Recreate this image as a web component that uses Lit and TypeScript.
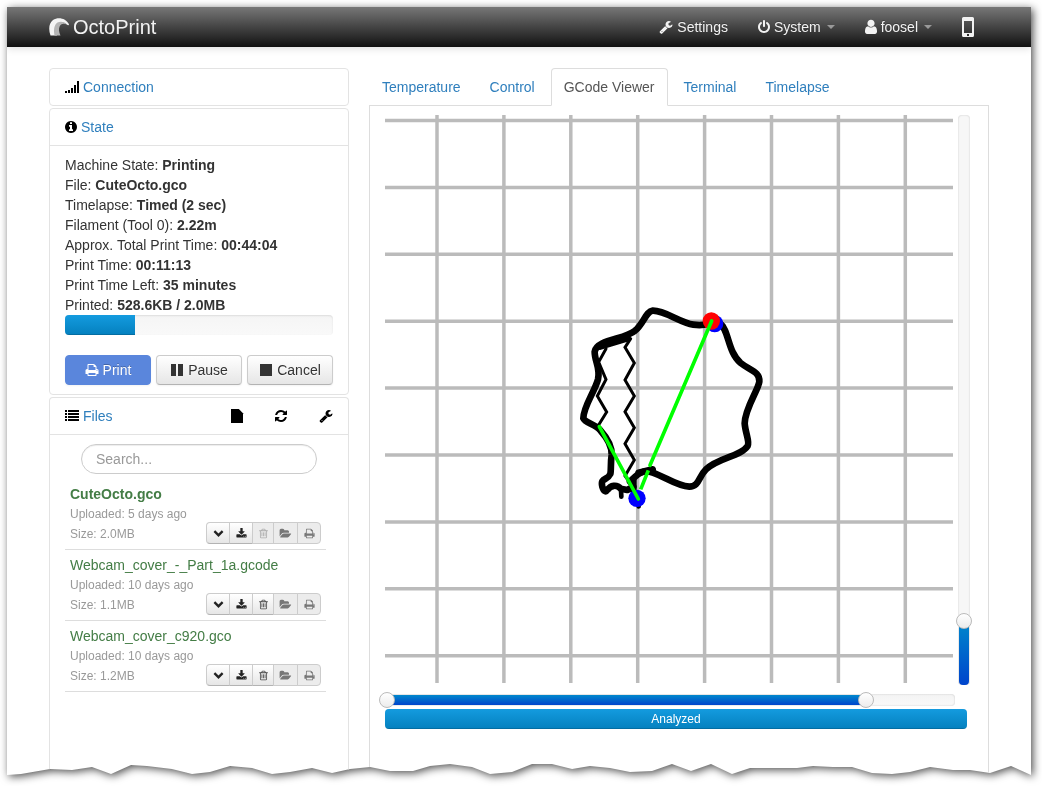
import { LitElement, html, svg, css, unsafeCSS, nothing } from "lit";
import { customElement } from "lit/decorators.js";
import { classMap } from "lit/directives/class-map.js";
import { styleMap } from "lit/directives/style-map.js";

// Torn lower edge of the sheet: [distance along a 1024 unit width, rise above the bottom in px]
const TEAR: [number, number][] = [
  [0, 0], [14, 1], [43, 6], [65, 5], [85, 8], [104, 1], [124, 10], [140, 9], [165, 6], [185, 1], [203, 3],
  [223, 9], [245, 7], [265, 1], [283, 3], [305, 7], [325, 2], [343, 6], [363, 8], [383, 4], [406, 4], [423, 9],
  [443, 11], [465, 8], [483, 1], [505, 3], [525, 11], [545, 11], [565, 6], [583, 9], [603, 7], [623, 3],
  [645, 4], [665, 11], [684, 4], [704, 11], [725, 1], [743, 7], [790, 7], [806, 9], [826, 8], [845, 8],
  [865, 2], [885, 1], [903, 3], [923, 8], [946, 5], [963, 5], [983, 2], [1004, 9], [1024, 0],
];
const tearPolygon = [
  "0 0",
  ...TEAR.map(([x, up]) => `${((x / 1024) * 100).toFixed(2)}% calc(100% - ${up}px)`),
  "100% 0",
].join(", ");

const ICONS: Record<string, string> = {
  wrench:
    "M448 1472q0-26-19-45t-45-19-45 19-19 45 19 45 45 19 45-19 19-45zm644-420l-682 682q-37 37-90 37-52 0-91-37l-106-108q-38-36-38-90 0-53 38-91l681-681q39 98 114.5 173.5t173.5 114.5zm634-435q0 39-23 106-47 134-164.5 217.5t-258.5 83.5q-185 0-316.5-131.5t-131.5-316.5 131.5-316.5 316.5-131.5q58 0 121.5 16.5t107.5 46.5q16 11 16 28t-16 28l-293 169v224l193 107q5-3 79-48.5t135.5-81 70.5-35.5q15 0 23.5 10t8.5 25z",
  power:
    "M1664 896q0 156-61 298t-164 245-245 164-298 61-298-61-245-164-164-245-61-298q0-182 80.5-343t226.5-270q43-32 95.5-25t83.5 50q32 42 24.5 94.5t-49.5 84.5q-98 74-151.5 181t-53.5 228q0 104 40.5 198.5t109.5 163.5 163.5 109.5 198.5 40.5 198.5-40.5 163.5-109.5 109.5-163.5 40.5-198.5q0-121-53.5-228t-151.5-181q-42-32-49.5-84.5t24.5-94.5q31-43 84-50t95 25q146 109 226.5 270t80.5 343zm-640-768v640q0 52-38 90t-90 38-90-38-38-90v-640q0-52 38-90t90-38 90 38 38 90z",
  user:
    "M1536 1399q0 109-62.5 187t-150.5 78h-854q-88 0-150.5-78t-62.5-187q0-85 8.5-160.5t31.5-152 58.5-131 94-89 134.5-34.5q131 128 313 128t313-128q76 0 134.5 34.5t94 89 58.5 131 31.5 152 8.5 160.5zm-256-887q0 159-112.5 271.5t-271.5 112.5-271.5-112.5-112.5-271.5 112.5-271.5 271.5-112.5 271.5 112.5 112.5 271.5z",
  info:
    "M1152 1376v-160q0-14-9-23t-23-9h-96v-512q0-14-9-23t-23-9h-320q-14 0-23 9t-9 23v160q0 14 9 23t23 9h96v320h-96q-14 0-23 9t-9 23v160q0 14 9 23t23 9h448q14 0 23-9t9-23zm-128-896v-160q0-14-9-23t-23-9h-192q-14 0-23 9t-9 23v160q0 14 9 23t23 9h192q14 0 23-9t9-23zm640 416q0 209-103 385.5t-279.5 279.5-385.5 103-385.5-103-279.5-279.5-103-385.5 103-385.5 279.5-279.5 385.5-103 385.5 103 279.5 279.5 103 385.5z",
  print:
    "M448 1536h896v-256h-896v256zm0-640h896v-384h-160q-40 0-68-28t-28-68v-160h-640v640zm1152 64q0-26-19-45t-45-19-45 19-19 45 19 45 45 19 45-19 19-45zm128 0v416q0 13-9.5 22.5t-22.5 9.5h-224v160q0 40-28 68t-68 28h-960q-40 0-68-28t-28-68v-160h-224q-13 0-22.5-9.5t-9.5-22.5v-416q0-79 56.5-135.5t135.5-56.5h64v-544q0-40 28-68t68-28h672q40 0 88 20t76 48l152 152q28 28 48 76t20 88v256h64q79 0 135.5 56.5t56.5 135.5z",
  refresh:
    "M1639 1056q0 5-1 7-64 268-268 434.5t-478 166.5q-146 0-282.5-55t-243.5-157l-129 129q-19 19-45 19t-45-19-19-45v-448q0-26 19-45t45-19h448q26 0 45 19t19 45-19 45l-137 137q71 66 161 102t187 36q134 0 250-65t186-179q11-17 53-117 8-23 30-23h192q13 0 22.5 9.5t9.5 22.5zm25-800v448q0 26-19 45t-45 19h-448q-26 0-45-19t-19-45 19-45l138-138q-148-137-349-137-134 0-250 65t-186 179q-11 17-53 117-8 23-30 23h-199q-13 0-22.5-9.5t-9.5-22.5v-7q65-268 270-434.5t480-166.5q146 0 284 55.5t245 156.5l130-129q19-19 45-19t45 19 19 45z",
  trash:
    "M704 736v576q0 14-9 23t-23 9h-64q-14 0-23-9t-9-23v-576q0-14 9-23t23-9h64q14 0 23 9t9 23zm256 0v576q0 14-9 23t-23 9h-64q-14 0-23-9t-9-23v-576q0-14 9-23t23-9h64q14 0 23 9t9 23zm256 0v576q0 14-9 23t-23 9h-64q-14 0-23-9t-9-23v-576q0-14 9-23t23-9h64q14 0 23 9t9 23zm128 724v-948h-896v948q0 22 7 40.5t14.5 27 10.5 8.5h832q3 0 10.5-8.5t14.5-27 7-40.5zm-672-1076h448l-48-117q-7-9-17-11h-317q-10 2-17 11zm928 32v64q0 14-9 23t-23 9h-96v948q0 83-47 143.5t-113 60.5h-832q-66 0-113-58.5t-47-141.5v-952h-96q-14 0-23-9t-9-23v-64q0-14 9-23t23-9h309l70-167q15-37 54-63t79-26h320q40 0 79 26t54 63l70 167h309q14 0 23 9t9 23z",
  folder:
    "M1815 952q0 31-31 66l-336 396q-43 51-120.5 86.5t-143.5 35.5h-1088q-34 0-60.5-13t-26.5-43q0-31 31-66l336-396q43-51 120.5-86.5t143.5-35.5h1088q34 0 60.5 13t26.5 43zm-343-344v160h-832q-94 0-197 47.5t-164 119.5l-337 396-5 6q0-4-.5-12.5t-.5-12.5v-960q0-92 66-158t158-66h320q92 0 158 66t66 158v32h544q92 0 158 66t66 158z",
  download:
    "M1344 1344q0-26-19-45t-45-19-45 19-19 45 19 45 45 19 45-19 19-45zm256 0q0-26-19-45t-45-19-45 19-19 45 19 45 45 19 45-19 19-45zm128-224v320q0 40-28 68t-68 28h-1472q-40 0-68-28t-28-68v-320q0-40 28-68t68-28h465l135 136q58 56 136 56t136-56l136-136h464q40 0 68 28t28 68zm-325-569q17 41-14 70l-448 448q-18 19-45 19t-45-19l-448-448q-31-29-14-70 17-39 59-39h256v-448q0-26 19-45t45-19h256q26 0 45 19t19 45v448h256q42 0 59 39z",
  chevron: "M90 640L360 370L896 906L1432 370L1702 640L896 1446z",
  list: "M0 128h256v256H0zM384 128h1408v256H384zM0 512h256v256H0zM384 512h1408v256H384zM0 896h256v256H0zM384 896h1408v256H384zM0 1280h256v256H0zM384 1280h1408v256H384z",
  signal: "M0 1408h256v256H0zM384 1280h256v384H384zM768 1024h256v640H768zM1152 640h256v1024H1152zM1536 128h256v1536H1536z",
  pause: "M128 128h640v1536H128zM1024 128h640v1536H1024z",
  stop: "M128 128h1536v1536H128z",
  file: "M128 0H1130L1664 534V1792H128z",
};

// Glyphs whose drawing is narrower than the full em square
const NARROW: Record<string, string> = {
  power: "128 0 1536 1792",
  info: "128 0 1536 1792",
  refresh: "128 0 1536 1792",
  file: "128 0 1536 1792",
  user: "256 160 1280 1493",
};

const icon = (name: string, size = "") => html`<svg
  class="icon ${size} ${name in NARROW ? "narrow" : ""}"
  viewBox=${NARROW[name] ?? "0 0 1792 1792"}
  aria-hidden="true"
>
  <path d=${ICONS[name]}></path>
</svg>`;

const STATE: [string, string][] = [
  ["Machine State", "Printing"],
  ["File", "CuteOcto.gco"],
  ["Timelapse", "Timed (2 sec)"],
  ["Filament (Tool 0)", "2.22m"],
  ["Approx. Total Print Time", "00:44:04"],
  ["Print Time", "00:11:13"],
  ["Print Time Left", "35 minutes"],
  ["Printed", "528.6KB / 2.0MB"],
];

const FILES = [
  { name: "CuteOcto.gco", age: "5 days ago", size: "2.0MB", active: true },
  { name: "Webcam_cover_-_Part_1a.gcode", age: "10 days ago", size: "1.1MB", active: false },
  { name: "Webcam_cover_c920.gco", age: "10 days ago", size: "1.2MB", active: false },
];

const TABS = ["Temperature", "Control", "GCode Viewer", "Terminal", "Timelapse"];

@customElement("app-root")
export class AppRoot extends LitElement {
  static styles = css`
    :host {
      display: flex;
      flex-direction: column;
      box-sizing: border-box;
      min-height: 100vh;
      padding: 7px 11px 11px 7px;
      background: #fff;
      color: #333;
      font-family: "Liberation Sans", Arial, sans-serif;
      font-size: 14px;
      line-height: 20px;
    }
    * {
      box-sizing: border-box;
    }
    a {
      color: #2f7fbd;
      text-decoration: none;
    }
    button,
    input {
      font: inherit;
      color: inherit;
      margin: 0;
    }
    .icon {
      width: 14px;
      height: 14px;
      fill: currentColor;
      flex: none;
      overflow: visible;
    }
    .icon.narrow {
      width: 12px;
    }
    .icon.small {
      width: 11px;
      height: 11px;
    }
    .shadow {
      flex: 1;
      display: flex;
      filter: drop-shadow(2px 2px 4px rgba(0, 0, 0, 0.7));
    }
    .sheet {
      flex: 1;
      display: flex;
      flex-direction: column;
      min-width: 0;
      background: #fff;
      clip-path: polygon(${unsafeCSS(tearPolygon)});
    }
    .wrap {
      width: 100%;
      max-width: 940px;
      margin: 0 auto;
    }

    .navbar {
      background: linear-gradient(#777, #444 50%, #111);
      box-shadow: 0 1px 8px rgba(0, 0, 0, 0.15);
      color: #f2f2f2;
    }
    .bar {
      display: flex;
      align-items: center;
      justify-content: space-between;
      height: 40px;
    }
    .brand {
      display: flex;
      align-items: center;
      gap: 4px;
      color: #f2f2f2;
      font-size: 20px;
    }
    .logo {
      width: 20px;
      height: 20px;
    }
    .nav {
      display: flex;
      list-style: none;
      margin: 0;
      padding: 0;
    }
    .nav a {
      display: flex;
      align-items: center;
      gap: 4px;
      height: 40px;
      padding: 0 15px;
      color: #f2f2f2;
      text-shadow: 0 -1px 0 rgba(0, 0, 0, 0.25);
    }
    .caret {
      border: 4px solid transparent;
      border-top-color: #999;
      border-bottom-width: 0;
      margin-left: 2px;
    }
    .phone {
      width: 12px;
      height: 20px;
    }

    .page {
      flex: 1;
      display: flex;
      gap: 20px;
      padding-top: 21px;
    }
    .sidebar {
      flex: 0 0 300px;
      display: flex;
      flex-direction: column;
      gap: 2px;
    }
    .panel {
      border: 1px solid #e3e3e3;
      border-radius: 4px;
    }
    .panel.last {
      flex: 1;
      border-bottom: 0;
      border-radius: 4px 4px 0 0;
    }
    .head {
      display: flex;
      align-items: center;
      gap: 4px;
      margin: 0;
      padding: 8px 15px;
      font-size: 14px;
      font-weight: normal;
      color: #000;
    }
    .tools {
      display: flex;
      gap: 32px;
      margin-left: auto;
    }
    .tools button {
      display: flex;
      padding: 0;
      border: 0;
      background: none;
    }
    .body {
      border-top: 1px solid #e3e3e3;
      padding: 9px 15px;
    }
    .facts {
      margin: 0;
      padding: 0;
      list-style: none;
    }
    .progress {
      height: 20px;
      border-radius: 4px;
      overflow: hidden;
      background: linear-gradient(#f5f5f5, #f9f9f9);
      box-shadow: inset 0 1px 2px rgba(0, 0, 0, 0.1);
    }
    .fill {
      height: 20px;
      background: linear-gradient(#149bdf, #0480be);
      box-shadow: inset 0 -1px 0 rgba(0, 0, 0, 0.15);
      color: #fff;
      font-size: 12px;
      text-align: center;
    }
    .actions {
      display: flex;
      gap: 5px;
      margin-top: 20px;
    }
    .btn {
      flex: 1;
      display: flex;
      align-items: center;
      justify-content: center;
      gap: 4px;
      height: 30px;
      padding: 0;
      border: 1px solid #bbb;
      border-color: #ccc #ccc #b3b3b3;
      border-radius: 4px;
      background: linear-gradient(#fff, #e6e6e6);
      box-shadow: 0 1px 2px rgba(0, 0, 0, 0.05);
      text-shadow: 0 1px 1px rgba(255, 255, 255, 0.75);
    }
    .btn.primary {
      border-color: #5a86dc;
      background: #5a86dc;
      color: #fff;
      text-shadow: 0 -1px 0 rgba(0, 0, 0, 0.25);
    }

    .search {
      display: block;
      width: auto;
      margin: 0 16px;
    }
    .search input {
      width: 100%;
      height: 30px;
      padding: 0 14px;
      border: 1px solid #ccc;
      border-radius: 15px;
      background: #fff;
      box-shadow: inset 0 1px 1px rgba(0, 0, 0, 0.075);
      outline: 0;
    }
    .search input::placeholder {
      color: #999;
    }
    .files {
      list-style: none;
      margin: 5px 7px 0 0;
      padding: 0;
    }
    .file {
      padding: 5px;
      border-bottom: 1px solid #ddd;
    }
    .name {
      color: #447d46;
    }
    .name.active {
      font-weight: bold;
    }
    .meta {
      color: #999;
      font-size: 12px;
    }
    .row {
      display: flex;
      justify-content: space-between;
      height: 20px;
    }
    .group {
      display: flex;
      height: 22px;
      margin-top: -2px;
    }
    .mini {
      display: flex;
      align-items: center;
      justify-content: center;
      width: 24px;
      padding: 0;
      border: 1px solid #ccc;
      border-bottom-color: #b3b3b3;
      margin-left: -1px;
      background: linear-gradient(#fff, #e6e6e6);
      color: #222;
    }
    .mini.trash {
      width: 22px;
      color: #444;
    }
    .mini.folder {
      width: 25px;
    }
    .mini:first-child {
      border-radius: 4px 0 0 4px;
    }
    .mini:last-child {
      border-radius: 0 4px 4px 0;
    }
    .mini:disabled {
      background: #ececec;
      border-color: #ccc;
      color: #777;
    }
    .mini.trash:disabled {
      color: #aaa;
    }

    .content {
      flex: 1;
      min-width: 0;
      display: flex;
      flex-direction: column;
    }
    .tabs {
      display: flex;
      gap: 3px;
      list-style: none;
      margin: 0;
      padding: 0;
      border-bottom: 1px solid #ddd;
    }
    .tab {
      display: block;
      margin-bottom: -1px;
      padding: 8px 12px;
      border: 1px solid transparent;
      border-radius: 4px 4px 0 0;
    }
    .tab.active {
      border-color: #ddd #ddd #fff;
      background: #fff;
      color: #555;
    }
    .pane {
      flex: 1;
      border: 1px solid #ddd;
      border-width: 0 1px;
      padding: 9px 18px 40px 15px;
    }
    .viewer {
      display: grid;
      grid-template-columns: minmax(0, 1fr) 12px;
      column-gap: 3px;
      row-gap: 9px;
    }
    .canvas {
      display: block;
      width: 100%;
    }
    .slider {
      display: grid;
      border-radius: 4px;
      background: linear-gradient(#f3f3f3, #f9f9f9);
      box-shadow: inset 0 0 2px rgba(0, 0, 0, 0.2);
    }
    .slider > * {
      grid-area: 1 / 1;
    }
    .slider.h {
      height: 12px;
    }
    .slider.v {
      width: 12px;
      background: #f7f7f7;
    }
    .range {
      background: linear-gradient(#0088cc, #0044cc);
    }
    .h .range {
      margin: 1px 0;
      border-radius: 4px;
    }
    .v .range {
      align-self: end;
      margin: 0 1px;
      border-radius: 0 0 4px 4px;
    }
    .slider input {
      appearance: none;
      background: none;
      pointer-events: none;
      outline: 0;
    }
    .h input {
      width: calc(100% + 16px);
      height: 16px;
      margin: -2px -8px;
    }
    .v input {
      writing-mode: vertical-lr;
      direction: rtl;
      width: 16px;
      height: calc(100% + 16px);
      margin: -8px -2px;
    }
    .slider input::-webkit-slider-thumb {
      appearance: none;
      pointer-events: auto;
      width: 16px;
      height: 16px;
      border: 1px solid #bbb;
      border-radius: 50%;
      background: linear-gradient(#fff, #ececec);
    }
    .analysis {
      margin: 3px 3px 0 0;
    }
  `;

  private renderNav() {
    return html`<header class="navbar">
      <div class="wrap bar">
        <a class="brand" href="#">
          <svg class="logo" viewBox="0 0 20 20" aria-hidden="true">
            <path
              fill="#f4f4f4"
              d="M1.500 18.500C-.8 12 0 6 4 3C9-.5 17 1 20 7.300C20 8.200 19 8.500 18.200 7.800C15 4.500 10 5 8 8.200C6.500 11 7 14.500 8 18.500z"
            ></path>
            <path
              fill="#b4b4b4"
              d="M5.500 18.500C4.500 12.500 5 8 8.500 5.500C12 3.700 16 5 18.200 7.800C15 6.200 12.500 6.500 10.800 9C9.300 12 10 15 11.500 18.500z"
            ></path>
          </svg>
          OctoPrint
        </a>
        <nav>
          <ul class="nav">
            <li><a href="#settings">${icon("wrench")}Settings</a></li>
            <li><a href="#system">${icon("power")}System<span class="caret"></span></a></li>
            <li><a href="#user">${icon("user")}foosel<span class="caret"></span></a></li>
            <li>
              <a href="#touch" aria-label="Touch interface">
                <svg class="phone" viewBox="0 0 12 20" aria-hidden="true">
                  <path
                    fill="#f2f2f2"
                    fill-rule="evenodd"
                    d="M1.500 0h9Q12 0 12 1.500v17q0 1.500-1.500 1.500h-9Q0 20 0 18.500v-17Q0 0 1.500 0zM2 4v12h8V4zM5 17h2v2H5z"
                  ></path>
                </svg>
              </a>
            </li>
          </ul>
        </nav>
      </div>
    </header>`;
  }

  private renderFile(f: (typeof FILES)[number]) {
    return html`<li class="file">
      <div class=${classMap({ name: true, active: f.active })}>${f.name}</div>
      <div class="meta">Uploaded: ${f.age}</div>
      <div class="meta row">
        <span>Size: ${f.size}</span>
        <div class="group">
          <button class="mini" aria-label="More">${icon("chevron", "small")}</button>
          <button class="mini" aria-label="Download">${icon("download", "small")}</button>
          <button class="mini trash" aria-label="Remove" ?disabled=${f.active}>${icon("trash", "small")}</button>
          <button class="mini folder" aria-label="Load" disabled>${icon("folder", "small")}</button>
          <button class="mini" aria-label="Load and print" disabled>${icon("print", "small")}</button>
        </div>
      </div>
    </li>`;
  }

  private renderSidebar() {
    return html`<aside class="sidebar">
      <section class="panel">
        <h2 class="head">${icon("signal")}<a href="#connection">Connection</a></h2>
      </section>
      <section class="panel">
        <h2 class="head">${icon("info")}<a href="#state">State</a></h2>
        <div class="body">
          <ul class="facts">
            ${STATE.map(([k, v]) => html`<li>${k}: <strong>${v}</strong></li>`)}
          </ul>
          <div class="progress" role="progressbar" aria-label="Print progress" aria-valuenow="26">
            <div class="fill" style=${styleMap({ width: "26%" })}></div>
          </div>
          <div class="actions">
            <button class="btn primary">${icon("print")}Print</button>
            <button class="btn">${icon("pause")}Pause</button>
            <button class="btn">${icon("stop")}Cancel</button>
          </div>
        </div>
      </section>
      <section class="panel last">
        <h2 class="head">
          ${icon("list")}<a href="#files">Files</a>
          <span class="tools">
            <button aria-label="Storage">${icon("file")}</button>
            <button aria-label="Refresh">${icon("refresh")}</button>
            <button aria-label="File list settings">${icon("wrench")}</button>
          </span>
        </h2>
        <div class="body">
          <label class="search"><input type="text" aria-label="Search files" placeholder="Search..." /></label>
          <ul class="files">
            ${FILES.map((f) => this.renderFile(f))}
          </ul>
        </div>
      </section>
    </aside>`;
  }

  private renderCanvas() {
    const cols = Array.from({ length: 8 }, (_, i) => 52 + i * 66.9);
    const rows = Array.from({ length: 9 }, (_, i) => 5.5 + i * 66.9);
    return html`<svg class="canvas" viewBox="0 0 570 570" role="img" aria-label="Layer preview">
      <g stroke="#bbb" stroke-width="3.5">
        ${cols.map((x) => svg`<line x1=${x} x2=${x} y1="0" y2="568"></line>`)}
        ${rows.map((y) => svg`<line x1="0" x2="568" y1=${y} y2=${y}></line>`)}
      </g>
      <g transform="translate(185 175) scale(.33333)" fill="none" stroke-linecap="round" stroke-linejoin="round">
        <g stroke="#000" stroke-width="20">
          <path d="M428 98C410 105 385 106 370 104C330 98 285 61 248 62C228 64 220 102 195 122C165 148 80 148 74 185C74 215 92 235 84 268C74 305 40 350 40 385C46 400 76 402 92 422C110 442 126 470 125 495C121 520 124 540 121 552C112 572 90 562 97 590C102 606 108 606 112 600C122 586 140 582 152 596L172 600L190 590"></path>
          <path d="M448 98C478 120 472 185 512 219C538 240 571 245 568 275C565 300 525 355 524 400C526 430 540 455 533 468C512 500 445 502 408 538C385 560 388 590 358 590C320 588 285 560 248 548C215 535 195 560 180 575"></path>
          <path d="M90 170L172 145M190 568L190 600M206 548L248 538"></path>
          <path d="M153 600L154 620M205 630L206 649" stroke-width="14"></path>
        </g>
        <g stroke="#000" stroke-width="9" stroke-linejoin="miter">
          <path d="M182 146L165 172L193 219L165 270L193 318L165 365L193 413L165 461L193 510L165 558L182 582"></path>
          <path d="M108 176L86 216L108 268L82 318L110 366L84 408"></path>
        </g>
        <circle cx="434" cy="101" r="26" fill="#00f"></circle>
        <circle cx="424" cy="93" r="26" fill="#f00"></circle>
        <circle cx="201" cy="625" r="26" fill="#00f"></circle>
        <g stroke="#0f0" stroke-width="11">
          <path d="M88 410L205 627M425 93L240 526"></path>
          <path d="M235 541L212 598" stroke-linecap="butt"></path>
        </g>
      </g>
    </svg>`;
  }

  private renderViewer() {
    const from = 3;
    const to = 844;
    const layer = 113;
    return html`<div class="pane">
      <div class="viewer">
        ${this.renderCanvas()}
        <div class="slider v">
          <div class="range" style=${styleMap({ height: `${layer / 10}%` })}></div>
          <input type="range" min="0" max="1000" .value=${String(layer)} aria-label="Layer" />
        </div>
        <div class="slider h">
          <div class="range" style=${styleMap({ width: `${to / 10}%` })}></div>
          <input type="range" min="0" max="1000" .value=${String(from)} aria-label="First command" />
          <input type="range" min="0" max="1000" .value=${String(to)} aria-label="Last command" />
        </div>
      </div>
      <div class="progress analysis" role="progressbar" aria-label="Analysis" aria-valuenow="100">
        <div class="fill">Analyzed</div>
      </div>
    </div>`;
  }

  render() {
    return html`<div class="shadow">
      <div class="sheet">
        ${this.renderNav()}
        <main class="wrap page">
          ${this.renderSidebar()}
          <section class="content">
            <ul class="tabs">
              ${TABS.map((t) => {
                const active = t === "GCode Viewer";
                return html`<li>
                  <a
                    class=${classMap({ tab: true, active })}
                    href="#${t.toLowerCase().replace(" ", "-")}"
                    aria-current=${active ? "page" : nothing}
                    >${t}</a
                  >
                </li>`;
              })}
            </ul>
            ${this.renderViewer()}
          </section>
        </main>
      </div>
    </div>`;
  }
}
